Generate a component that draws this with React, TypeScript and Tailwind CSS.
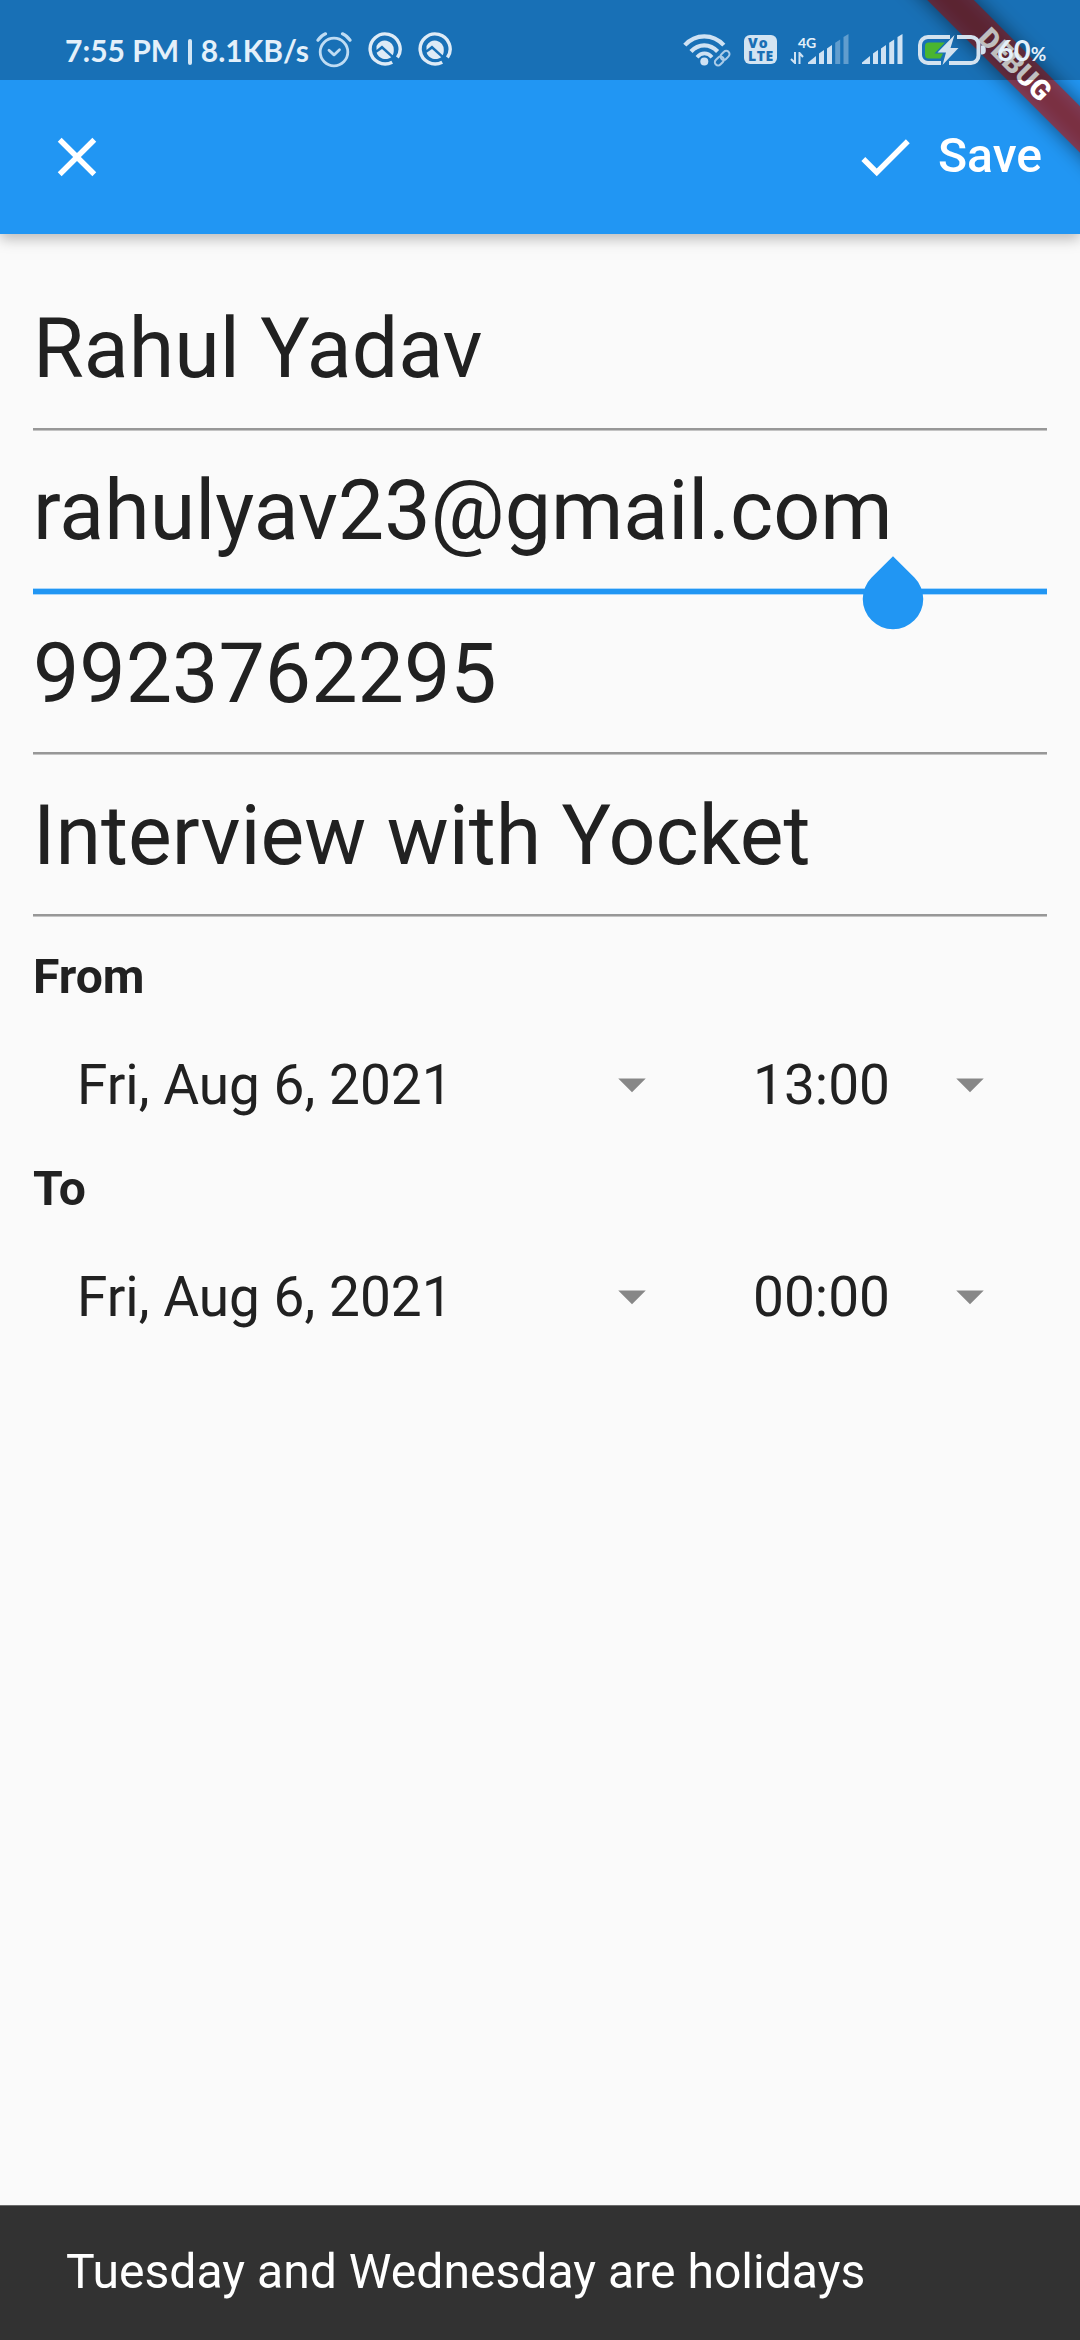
import React from "react";

const ICE = "#deebf6";

function Caret() {
  return (
    <svg viewBox="0 0 24 24" className="size-[66px] shrink-0 fill-[#878787]">
      <path d="M7 10l5 5 5-5z" />
    </svg>
  );
}

function Field({ value, top, focused = false }: { value: string; top: string; focused?: boolean }) {
  return (
    <div className={`relative flex flex-col justify-end ${top}`}>
      <div className="absolute left-0 top-[33px] whitespace-nowrap text-[82.5px] leading-[97px]">{value}</div>
      {focused ? (
        <div className="h-[7px] w-full border-y border-[#a9d6fb] bg-[#2196f3]" />
      ) : (
        <div className="h-[3px] w-full border-b border-[#c4c4c4] bg-[#979797]" />
      )}
      {focused && (
        <svg viewBox="0 0 62 74" className="absolute left-[829px] top-[127px] h-[74px] w-[62px] fill-[#2196f3]">
          <path d="M31 0.2 L52.4 21.6 A30.25 30.25 0 1 1 9.6 21.6 Z" />
        </svg>
      )}
    </div>
  );
}

function DateRow({ date, time }: { date: string; time: string }) {
  return (
    <div className="flex h-[66px] text-[55px] leading-[66px]">
      <div className="flex w-[676px] items-center justify-between px-11">
        <span className="pt-[2px]">{date}</span>
        <Caret />
      </div>
      <div className="flex w-[338px] items-center justify-between px-11">
        <span className="pt-[2px]">{time}</span>
        <Caret />
      </div>
    </div>
  );
}

function AlarmIcon() {
  return (
    <svg viewBox="0 0 36 36" className="size-9" fill="none" stroke="#bfdcf3" strokeWidth="2.8" strokeLinecap="round" strokeLinejoin="round">
      <circle cx="18" cy="20" r="13.8" />
      <path d="M13 18.3l5 4.6 5.5-5.2" />
      <path d="M2 8.2C4 5.2 6.5 3 9.5 1.8M26.500 1.800C29.500 3 32 5.200 34 8.200" strokeWidth="3.2" />
    </svg>
  );
}

function QIcon() {
  return (
    <svg viewBox="0 0 34 34" className="size-[34px]">
      <path d="M24.200 30.200A15 15 0 1 1 29.400 25.600" fill="none" stroke={ICE} strokeWidth="3.4" />
      <path d="M8.500 14A9 9 0 0 1 25.800 17.800C25.800 20.500 25.400 22 24.600 23.200L14 13.600L8.500 18Z" fill={ICE} />
      <path d="M8.600 20.800L14 17L23.200 25.200A9.500 9.500 0 0 1 8.600 20.800Z" fill={ICE} />
    </svg>
  );
}

function WifiIcon() {
  return (
    <svg viewBox="0 0 48 34" className="h-[34px] w-12" fill="none" stroke="#cfe2f3" strokeWidth="4.200">
      <path d="M1.800 12.200C12.500 0.400 30 0.400 40.800 12.200" />
      <path d="M8 18.500C15.500 10.200 27 10.200 34.600 18.500" />
      <path d="M14 24.200C18.500 19.200 24.500 19.200 29 24.200" strokeWidth="3.800" />
      <circle cx="21.300" cy="28.500" r="4" fill="#cfe2f3" stroke="none" />
      <g strokeWidth="2" stroke="#a9cbe8" transform="rotate(-45 39 25)">
        <rect x="30" y="22" width="10" height="6.500" rx="3.200" />
        <rect x="38" y="22" width="10" height="6.500" rx="3.200" />
      </g>
    </svg>
  );
}

function Signal({ dim = false }: { dim?: boolean }) {
  return (
    <svg viewBox="0 0 41 30" className="h-[30px] w-[41px]" fill="#cfe2f3">
      <path d="M0 30v-1.500L8 22v8z" />
      <path d="M11 19.500l5-3.500v14h-5z" />
      <path d="M19 14.500l5-3.500v19h-5z" />
      <path d="M27.200 8.700l5-3.200V30h-5z" fillOpacity={dim ? 0.4 : 1} />
      <path d="M35.500 3l5-3v30h-5z" fillOpacity={dim ? 0.4 : 1} />
    </svg>
  );
}

function BatteryIcon() {
  return (
    <svg viewBox="0 0 68 36" className="h-9 w-[68px]" fill="none">
      <path d="M23 29H10A8 8 0 0 1 2 21V11A8 8 0 0 1 10 3H32M39 3H53A7.500 7.500 0 0 1 60.500 10.500V21.500A7.500 7.500 0 0 1 53 29H31" stroke="#d3e2ef" strokeWidth="4" />
      <path d="M63 11.500C68 11.500 67.800 14 67.800 16C67.800 19 67 20.500 63 20.500Z" fill="#d3e2ef" />
      <path d="M10.500 8.500H27L16.500 19.500H25L22.500 24.500H10.500A3.500 3.500 0 0 1 7 21V12A3.500 3.500 0 0 1 10.500 8.500Z" fill="#4ab52f" />
      <path d="M36.500 1L19.500 18.500H28L24.500 31L40.500 14H32.500Z" fill="#d3e2ef" />
    </svg>
  );
}

function StatusBar() {
  return (
    <div className="absolute inset-x-0 top-0 z-20 flex h-20 bg-black/25 text-[#e4f0fa]">
      <div className="ml-[65px] mt-[30px] flex h-10 w-[244px] items-center justify-between whitespace-nowrap font-['Lato'] text-[30px] font-bold leading-10">
        <span>7:55 PM</span>
        <span className="mt-[3px] h-[26px] w-1 rounded-full bg-[#d3e6f5]" />
        <span>8.1KB/s</span>
      </div>
      <div className="ml-[7px] mt-8 flex h-9 items-start gap-4">
        <AlarmIcon />
        <QIcon />
        <QIcon />
      </div>
      <div className="ml-auto mr-[34px] mt-[33px] flex h-9 items-start">
        <WifiIcon />
        <div className="ml-[13px] mt-[2px] flex h-[29px] w-[33px] flex-col rounded-[6px] bg-[#d3e4f2] pl-1 pt-[1px] font-['Open_Sans'] text-[14px] font-extrabold leading-[13px] text-[#1a6fb5]">
          <span className="tracking-[1px]">Vo</span>
          <span className="tracking-[0.5px]">LTE</span>
        </div>
        <div className="relative ml-[31px] mt-px h-[30px] w-[41px]">
          <Signal dim />
          <span className="absolute -left-[10px] top-[1px] font-['Lato'] text-[14px] font-bold leading-[15px]">4G</span>
          <svg viewBox="0 0 14 12" className="absolute -left-[18px] top-[18px] h-3 w-[14px]" fill="none" stroke="#cfe2f3" strokeWidth="2">
            <path d="M5 0V11L1 7M9.500 12V1L13 5" />
          </svg>
        </div>
        <div className="ml-[13px] mt-px"><Signal /></div>
        <div className="ml-[15px] mt-px"><BatteryIcon /></div>
        <div className="ml-[11px] flex w-[49px] items-baseline whitespace-nowrap font-['Lato'] font-bold leading-[34px]">
          <span className="text-[29px]">60</span>
          <span className="text-[19px]">%</span>
        </div>
      </div>
    </div>
  );
}

export default function App() {
  return (
    <div className="relative flex h-[2340px] w-[1080px] flex-col overflow-hidden bg-[#fafafa] font-['Roboto',sans-serif] text-[#212121]">
      <header className="flex h-[234px] shrink-0 items-center justify-between bg-[#2196f3] pl-11 pr-[38px] pt-20 text-white shadow-[0_5px_13px_rgba(0,0,0,0.26)]">
        <svg viewBox="0 0 24 24" className="size-[66px] fill-white">
          <path d="M19 6.410L17.590 5 12 10.590 6.410 5 5 6.410 10.590 12 5 17.590 6.410 19 12 13.410 17.590 19 19 17.590 13.410 12z" />
        </svg>
        <div className="flex items-center gap-5">
          <svg viewBox="0 0 24 24" className="size-[66px] fill-white">
            <path d="M9 16.170L4.830 12l-1.420 1.410L9 19 21 7l-1.410-1.410z" />
          </svg>
          <span className="pb-[3px] text-[48.125px] font-medium leading-[55px]">Save</span>
        </div>
      </header>

      <main className="flex flex-1 flex-col px-[33px]">
        <Field value="Rahul Yadav" top="mt-[33px] h-[164px]" />
        <Field value="rahulyav23@gmail.com" top="-mt-[2px] h-[166px]" focused />
        <Field value="9923762295" top="-mt-[3px] h-[163px]" />
        <Field value="Interview with Yocket" top="-mt-px h-[163px]" />
        <div className="mt-8 text-[48.125px] font-bold leading-[55px]">From</div>
        <div className="mt-[47px]"><DateRow date="Fri, Aug 6, 2021" time="13:00" /></div>
        <div className="mt-11 text-[48.125px] font-bold leading-[55px]">To</div>
        <div className="mt-[47px]"><DateRow date="Fri, Aug 6, 2021" time="00:00" /></div>
      </main>

      <footer className="flex h-[135px] shrink-0 items-center border-t border-[#6b6b6b] bg-[#323232] px-[66px] pb-[3px] text-[48.125px] leading-[55px] text-white">
        Tuesday and Wednesday are holidays
      </footer>

      <div className="absolute left-[865px] top-[48px] z-10 h-[33px] w-[300px] rotate-45">
        <div className="absolute inset-0 bg-black/50 blur-[10px]" />
        <div className="relative flex h-full items-center justify-center bg-[#b71c1c]/63 text-[28px] font-black leading-[33px] text-white">
          DEBUG
        </div>
      </div>
      <StatusBar />
    </div>
  );
}
